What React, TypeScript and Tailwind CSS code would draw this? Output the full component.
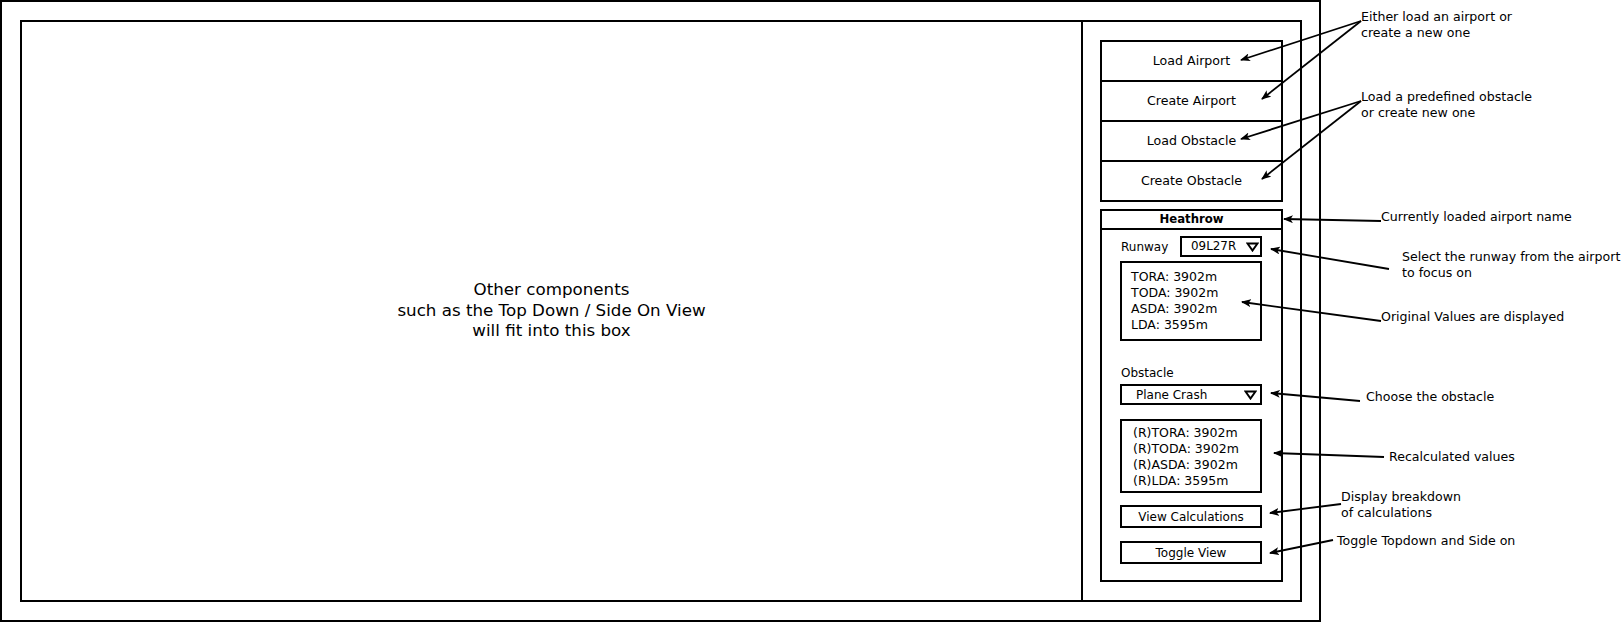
import React from 'react';

type Note = { left: number; top: number; lines: string[] };

const notes: Note[] = [
  { left: 1361, top: 9, lines: ['Either load an airport or', 'create a new one'] },
  { left: 1361, top: 89, lines: ['Load a predefined obstacle', 'or create new one'] },
  { left: 1381, top: 209, lines: ['Currently loaded airport name'] },
  { left: 1402, top: 249, lines: ['Select the runway from the airport', 'to focus on'] },
  { left: 1381, top: 309, lines: ['Original Values are displayed'] },
  { left: 1366, top: 389, lines: ['Choose the obstacle'] },
  { left: 1389, top: 449, lines: ['Recalculated values'] },
  { left: 1341, top: 489, lines: ['Display breakdown', 'of calculations'] },
  { left: 1337, top: 533, lines: ['Toggle Topdown and Side on'] },
];

// [x1, y1, x2, y2] - arrow points at (x2, y2)
const arrows: [number, number, number, number][] = [
  [1361, 21, 1241, 60],
  [1361, 21, 1262, 99],
  [1361, 101, 1241, 139],
  [1361, 101, 1262, 179],
  [1381, 221, 1284, 219],
  [1389, 269, 1271, 249],
  [1381, 321, 1242, 302],
  [1360, 401, 1271, 393],
  [1384, 457, 1274, 453],
  [1341, 504, 1270, 513],
  [1333, 540, 1270, 553],
];

const Caret: React.FC = () => (
  <svg width="13" height="10" viewBox="0 0 13 10" className="shrink-0">
    <path d="M1.5 1.5 H11.5 L6.5 8.5 Z" fill="none" stroke="black" strokeWidth="2" strokeLinejoin="miter" />
  </svg>
);

const MenuRow: React.FC<{ label: string; first?: boolean }> = ({ label, first }) => (
  <div className={`h-[38px] flex items-center justify-center text-[12.6px] ${first ? '' : 'border-t-2 border-black h-[40px]'}`}>
    {label}
  </div>
);

const Values: React.FC<{ rows: string[]; className: string }> = ({ rows, className }) => (
  <div className={`border-2 border-black text-[12.5px] leading-[16px] ${className}`}>
    {rows.map(r => (
      <div key={r}>{r}</div>
    ))}
  </div>
);

const App: React.FC = () => {
  return (
    <div className="relative w-[1622px] h-[622px] bg-white text-black font-['DejaVu_Sans',sans-serif] overflow-hidden">
      <div className="w-[1321px] h-[622px] border-2 border-black pl-[18px] pt-[18px]">
        <div className="w-[1282px] h-[582px] border-2 border-black flex">
          <div className="flex-1 border-r-2 border-black flex items-center justify-center">
            <p className="text-center text-[16.7px] leading-[20.5px] mb-[2px]">
              Other components
              <br />
              such as the Top Down / Side On View
              <br />
              will fit into this box
            </p>
          </div>

          <div className="w-[217px] pl-[17px] pt-[18px] flex flex-col gap-[7px]">
            <div className="w-[183px] border-2 border-black flex flex-col">
              <MenuRow label="Load Airport" first />
              <MenuRow label="Create Airport" />
              <MenuRow label="Load Obstacle" />
              <MenuRow label="Create Obstacle" />
            </div>

            <div className="w-[183px] h-[373px] border-2 border-black flex flex-col">
              <div className="h-[19px] border-b-2 border-black flex items-center justify-center text-[11.7px] font-bold">
                Heathrow
              </div>
              <div className="pl-[18px] pt-[6px] flex flex-col">
                <div className="w-[142px] flex items-center justify-between">
                  <span className="text-[12px] pl-px">Runway</span>
                  <div className="w-[82px] h-[21px] border-2 border-black flex items-center justify-between pl-[9px] pr-[1px] text-[11.9px]">
                    <span>09L27R</span>
                    <Caret />
                  </div>
                </div>

                <Values
                  rows={['TORA: 3902m', 'TODA: 3902m', 'ASDA: 3902m', 'LDA: 3595m']}
                  className="w-[142px] h-[80px] mt-[4px] pl-[9px] pt-[6px]"
                />

                <span className="text-[12px] leading-[16px] pl-px mt-[24px]">Obstacle</span>
                <div className="w-[142px] h-[21px] mt-[3px] border-2 border-black flex items-center justify-between pl-[14px] pr-[3px] text-[12px]">
                  <span>Plane Crash</span>
                  <Caret />
                </div>

                <Values
                  rows={['(R)TORA: 3902m', '(R)TODA: 3902m', '(R)ASDA: 3902m', '(R)LDA: 3595m']}
                  className="w-[142px] h-[74px] mt-[14px] pl-[11px] pt-[4px]"
                />

                <button className="w-[142px] h-[23px] mt-[12px] border-2 border-black text-[12px] flex items-center justify-center">
                  View Calculations
                </button>
                <button className="w-[142px] h-[23px] mt-[13px] border-2 border-black text-[12px] flex items-center justify-center">
                  Toggle View
                </button>
              </div>
            </div>
          </div>
        </div>
      </div>

      <svg className="absolute inset-0 pointer-events-none" width="1622" height="622">
        <defs>
          <marker id="head" viewBox="0 0 10 8" refX="9" refY="4" markerWidth="10" markerHeight="8" markerUnits="userSpaceOnUse" orient="auto">
            <path d="M0 0 L10 4 L0 8 L2.5 4 Z" fill="black" />
          </marker>
        </defs>
        {arrows.map(([x1, y1, x2, y2], i) => (
          <line key={i} x1={x1} y1={y1} x2={x2} y2={y2} stroke="black" strokeWidth="1.8" markerEnd="url(#head)" />
        ))}
      </svg>

      {notes.map(n => (
        <div key={n.top} className="absolute text-[12.6px] leading-[16px] whitespace-nowrap" style={{ left: n.left, top: n.top }}>
          {n.lines.map(l => (
            <div key={l}>{l}</div>
          ))}
        </div>
      ))}
    </div>
  );
};

export default App;
